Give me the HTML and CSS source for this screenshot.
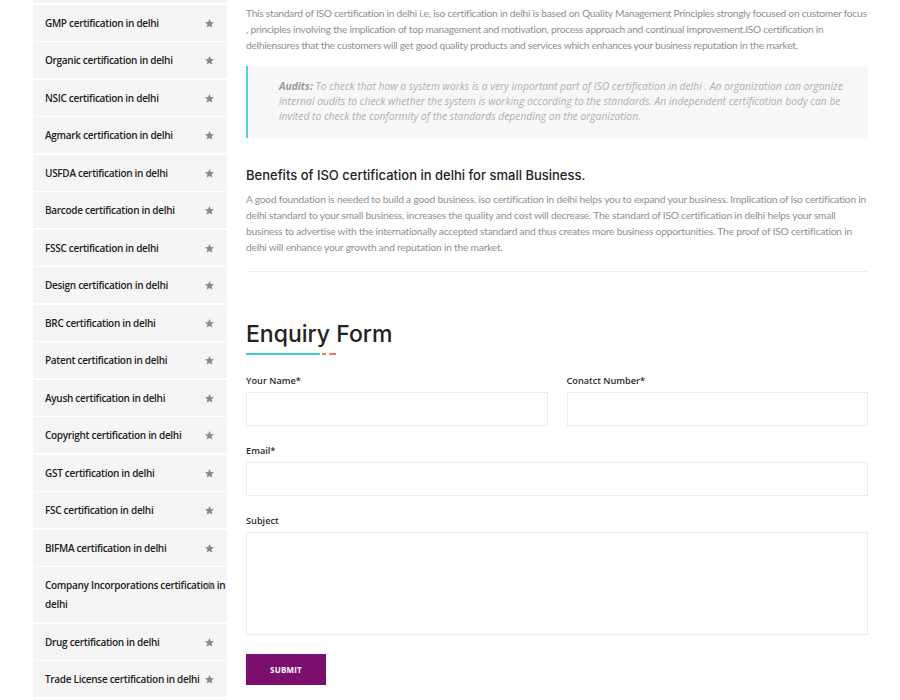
FILE: index.html
```html
<!DOCTYPE html>
<html>
<head>
  <title>ISO certification in delhi</title>
  <link rel="stylesheet" href="styles.css">
</head>
<body>

  <div class="page">
    <ul class="sidebar">
      <li>Halal certification in delhi<svg class="star" viewBox="0 0 24 24"><path d="M12 2l2.9 6.6 7.1.6-5.4 4.7 1.6 7-6.2-3.7-6.2 3.7 1.6-7L2 9.2l7.1-.6z"/></svg></li>
      <li>GMP certification in delhi<svg class="star" viewBox="0 0 24 24"><path d="M12 2l2.9 6.6 7.1.6-5.4 4.7 1.6 7-6.2-3.7-6.2 3.7 1.6-7L2 9.2l7.1-.6z"/></svg></li>
      <li>Organic certification in delhi<svg class="star" viewBox="0 0 24 24"><path d="M12 2l2.9 6.6 7.1.6-5.4 4.7 1.6 7-6.2-3.7-6.2 3.7 1.6-7L2 9.2l7.1-.6z"/></svg></li>
      <li>NSIC certification in delhi<svg class="star" viewBox="0 0 24 24"><path d="M12 2l2.9 6.6 7.1.6-5.4 4.7 1.6 7-6.2-3.7-6.2 3.7 1.6-7L2 9.2l7.1-.6z"/></svg></li>
      <li>Agmark certification in delhi<svg class="star" viewBox="0 0 24 24"><path d="M12 2l2.9 6.6 7.1.6-5.4 4.7 1.6 7-6.2-3.7-6.2 3.7 1.6-7L2 9.2l7.1-.6z"/></svg></li>
      <li>USFDA certification in delhi<svg class="star" viewBox="0 0 24 24"><path d="M12 2l2.9 6.6 7.1.6-5.4 4.7 1.6 7-6.2-3.7-6.2 3.7 1.6-7L2 9.2l7.1-.6z"/></svg></li>
      <li>Barcode certification in delhi<svg class="star" viewBox="0 0 24 24"><path d="M12 2l2.9 6.6 7.1.6-5.4 4.7 1.6 7-6.2-3.7-6.2 3.7 1.6-7L2 9.2l7.1-.6z"/></svg></li>
      <li>FSSC certification in delhi<svg class="star" viewBox="0 0 24 24"><path d="M12 2l2.9 6.6 7.1.6-5.4 4.7 1.6 7-6.2-3.7-6.2 3.7 1.6-7L2 9.2l7.1-.6z"/></svg></li>
      <li>Design certification in delhi<svg class="star" viewBox="0 0 24 24"><path d="M12 2l2.9 6.6 7.1.6-5.4 4.7 1.6 7-6.2-3.7-6.2 3.7 1.6-7L2 9.2l7.1-.6z"/></svg></li>
      <li>BRC certification in delhi<svg class="star" viewBox="0 0 24 24"><path d="M12 2l2.9 6.6 7.1.6-5.4 4.7 1.6 7-6.2-3.7-6.2 3.7 1.6-7L2 9.2l7.1-.6z"/></svg></li>
      <li>Patent certification in delhi<svg class="star" viewBox="0 0 24 24"><path d="M12 2l2.9 6.6 7.1.6-5.4 4.7 1.6 7-6.2-3.7-6.2 3.7 1.6-7L2 9.2l7.1-.6z"/></svg></li>
      <li>Ayush certification in delhi<svg class="star" viewBox="0 0 24 24"><path d="M12 2l2.9 6.6 7.1.6-5.4 4.7 1.6 7-6.2-3.7-6.2 3.7 1.6-7L2 9.2l7.1-.6z"/></svg></li>
      <li>Copyright certification in delhi<svg class="star" viewBox="0 0 24 24"><path d="M12 2l2.9 6.6 7.1.6-5.4 4.7 1.6 7-6.2-3.7-6.2 3.7 1.6-7L2 9.2l7.1-.6z"/></svg></li>
      <li>GST certification in delhi<svg class="star" viewBox="0 0 24 24"><path d="M12 2l2.9 6.6 7.1.6-5.4 4.7 1.6 7-6.2-3.7-6.2 3.7 1.6-7L2 9.2l7.1-.6z"/></svg></li>
      <li>FSC certification in delhi<svg class="star" viewBox="0 0 24 24"><path d="M12 2l2.9 6.6 7.1.6-5.4 4.7 1.6 7-6.2-3.7-6.2 3.7 1.6-7L2 9.2l7.1-.6z"/></svg></li>
      <li>BIFMA certification in delhi<svg class="star" viewBox="0 0 24 24"><path d="M12 2l2.9 6.6 7.1.6-5.4 4.7 1.6 7-6.2-3.7-6.2 3.7 1.6-7L2 9.2l7.1-.6z"/></svg></li>
      <li>Company Incorporations certification in delhi<svg class="star" viewBox="0 0 24 24"><path d="M12 2l2.9 6.6 7.1.6-5.4 4.7 1.6 7-6.2-3.7-6.2 3.7 1.6-7L2 9.2l7.1-.6z"/></svg></li>
      <li>Drug certification in delhi<svg class="star" viewBox="0 0 24 24"><path d="M12 2l2.9 6.6 7.1.6-5.4 4.7 1.6 7-6.2-3.7-6.2 3.7 1.6-7L2 9.2l7.1-.6z"/></svg></li>
      <li>Trade License certification in delhi<svg class="star" viewBox="0 0 24 24"><path d="M12 2l2.9 6.6 7.1.6-5.4 4.7 1.6 7-6.2-3.7-6.2 3.7 1.6-7L2 9.2l7.1-.6z"/></svg></li>
      <li>Trademark certification in delhi<svg class="star" viewBox="0 0 24 24"><path d="M12 2l2.9 6.6 7.1.6-5.4 4.7 1.6 7-6.2-3.7-6.2 3.7 1.6-7L2 9.2l7.1-.6z"/></svg></li>
    </ul>

    <div class="main">
      <p class="text intro">This standard of ISO certification in delhi i.e, iso certification in delhi is based on Quality Management Principles strongly focused on customer focus , principles involving the implication of top management and motivation, process approach and continual improvement.ISO certification in delhiensures that the customers will get good quality products and services which enhances your business reputation in the market.</p>

      <blockquote class="note">
        <strong>Audits:</strong> To check that how a system works is a very important part of ISO certification in delhi . An organization can organize internal audits to check whether the system is working according to the standards. An independent certification body can be invited to check the conformity of the standards depending on the organization.
      </blockquote>

      <h3 class="sub-title">Benefits of ISO certification in delhi for small Business.</h3>
      <p class="text">A good foundation is needed to build a good business. iso certification in delhi helps you to expand your business. Implication of iso certification in delhi standard to your small business, increases the quality and cost will decrease. The standard of ISO certification in delhi helps your small business to advertise with the internationally accepted standard and thus creates more business opportunities. The proof of ISO certification in delhi will enhance your growth and reputation in the market.</p>

      <hr class="divider">

      <h2 class="form-title">Enquiry Form</h2>
      <div class="title-line"><span class="line-main"></span><span class="dash"></span><span class="dash wide"></span></div>

      <form class="enquiry">
        <div class="row">
          <div class="field">
            <label for="name">Your Name*</label>
            <input type="text" id="name">
          </div>
          <div class="field">
            <label for="phone">Conatct Number*</label>
            <input type="text" id="phone">
          </div>
        </div>
        <div class="field">
          <label for="email">Email*</label>
          <input type="text" id="email">
        </div>
        <div class="field">
          <label for="subject">Subject</label>
          <textarea id="subject"></textarea>
        </div>
        <button type="button" class="submit">SUBMIT</button>
      </form>

      <div class="links">
        <a href="#">iso certification in delhi</a>
        <a href="#">iso certification in chandigarh</a>
        <a href="#" class="alt">iso certification in bhubaneswar</a>
      </div>
    </div>
  </div>

</body>
</html>
```

FILE: styles.css
```css
body {
    margin: 0;
    padding: 0;
    background-color: #ffffff;
    font-family: 'Lato', sans-serif;
    color: #333333;
    overflow: hidden;
}

.page {
    display: flex;
    gap: 19px;
    padding: 0 32px 0 33px;
}

.sidebar {
    width: 194px;
    flex-shrink: 0;
    list-style: none;
    padding: 0;
    margin: -33px 0 0 0;
}

.sidebar li {
    position: relative;
    background-color: #f5f5f5;
    margin-bottom: 1.5px;
    padding: 9px 0 8px 12px;
    font-family: 'Open Sans', sans-serif;
    font-size: 10px;
    font-weight: 600;
    letter-spacing: -0.3px;
    line-height: 19px;
    color: #222222;
}

.star {
    position: absolute;
    right: 12px;
    top: 13px;
    width: 11px;
    height: 11px;
    fill: #8a8a8a;
}

.main {
    flex: 1;
    min-width: 0;
    padding-top: 5px;
}

.text {
    margin: 0;
    font-size: 10.2px;
    letter-spacing: -0.2px;
    line-height: 16px;
    color: #8f8f8f;
    font-weight: 400;
}

.text.intro {
    letter-spacing: -0.25px;
}

.note {
    margin: 13px 0 0 0;
    padding: 12.5px 20px 14.5px 31px;
    background-color: #f7f7f7;
    border-left: 2px solid #4fd1dc;
    font-family: 'Open Sans', sans-serif;
    font-style: italic;
    font-size: 10.3px;
    line-height: 15px;
    color: #b0b0b0;
}

.note strong {
    color: #9a9a9a;
    font-weight: 700;
}

.sub-title {
    margin: 27px 0 6px 0;
    font-family: 'Inter', sans-serif;
    font-size: 13px;
    font-weight: 500;
    line-height: 20px;
    color: #222222;
}

.divider {
    border: none;
    border-top: 1px solid #efefef;
    margin: 16px 0 0 0;
}

.form-title {
    margin: 47px 0 0 0;
    font-family: 'Inter', sans-serif;
    font-size: 23px;
    font-weight: 500;
    line-height: 30px;
    color: #222222;
}

.title-line {
    display: flex;
    align-items: center;
    gap: 2px;
    margin-top: 4px;
    height: 2px;
}

.line-main {
    width: 74px;
    height: 2px;
    background-color: #45c9dc;
}

.dash {
    width: 4px;
    height: 1.5px;
    background-color: #f07a5a;
}

.dash.wide {
    width: 7px;
    margin-left: 1px;
}

.enquiry {
    margin-top: 18px;
}

.row {
    display: flex;
    gap: 19px;
}

.row .field {
    flex: 1;
}

.field {
    margin-bottom: 17px;
}

.field label {
    display: block;
    font-family: 'Open Sans', sans-serif;
    font-size: 9.2px;
    font-weight: 600;
    line-height: 16px;
    color: #2a2a2a;
    margin-bottom: 3px;
}

.field input,
.field textarea {
    display: block;
    width: 100%;
    height: 34px;
    box-sizing: border-box;
    border: 1px solid #ececec;
    background-color: #ffffff;
    border-radius: 0;
    padding: 6px 10px;
    font-size: 12px;
    outline: none;
}

.field textarea {
    height: 103px;
    resize: none;
}

.submit {
    display: block;
    width: 80px;
    height: 31px;
    margin-top: 19px;
    background-color: #7c0f6e;
    color: #ffffff;
    border: none;
    font-family: 'Open Sans', sans-serif;
    font-size: 8px;
    font-weight: 700;
    letter-spacing: 0.2px;
    cursor: pointer;
}

.links {
    display: grid;
    grid-template-columns: 200px 210px 1fr;
    margin-top: 12px;
    font-size: 10px;
}

.links a {
    color: #9a9a9a;
    text-decoration: none;
}

.links a.alt {
    color: #7d7d9a;
}
```
